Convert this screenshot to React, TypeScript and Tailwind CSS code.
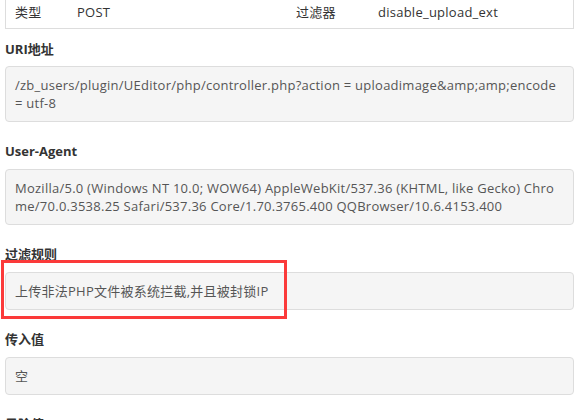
import React from 'react';

interface FieldProps {
  label: string;
  value: string;
  breakAll?: boolean;
  highlight?: boolean;
  first?: boolean;
}

const Field: React.FC<FieldProps> = ({ label, value, breakAll, highlight, first }) => (
  <div>
    <div className={`${first ? 'mt-[11px]' : 'mt-[20px]'} text-[13px] leading-[18px] font-bold text-[#333]`}>
      {label}
    </div>
    <div className={`relative ${first ? 'mt-[8px]' : 'mt-[9px]'}`}>
      <div
        className={`bg-[#f5f5f5] border border-[#dddddd] rounded-[4px] px-[9px] py-[9px] text-[13px] leading-[18px] tracking-[0.25px] text-[#555] ${
          breakAll ? 'break-all' : 'break-words'
        }`}
      >
        {value}
      </div>
      {/* red highlight frame drawn over the rule box */}
      {highlight && (
        <div className="absolute left-[-4px] top-[-12px] w-[286px] h-[59px] border-[3px] border-[#fb3a3a] pointer-events-none" />
      )}
    </div>
  </div>
);

export default function App() {
  return (
    <div
      className="w-[581px] h-[420px] overflow-hidden bg-white pl-[5px] pr-[7px]"
      style={{ fontFamily: '"Open Sans", "Noto Sans CJK SC", sans-serif' }}
    >
      {/* info table, top edge scrolled out of view */}
      <div className="-mt-[10px] border border-[#dddddd] bg-white grid grid-cols-[62px_219px_82px_1fr] pl-[9px] h-[39px] items-center text-[13px] tracking-[0.25px] text-[#333] pt-[6px]">
        <span>类型</span>
        <span>POST</span>
        <span>过滤器</span>
        <span>disable_upload_ext</span>
      </div>

      <Field
        first
        label="URI地址"
        value={'/zb_users/plugin/UEditor/php/controller.php?action = uploadimage&amp;amp;encode = utf-8'}
      />
      <Field
        label="User-Agent"
        breakAll
        value="Mozilla/5.0 (Windows NT 10.0; WOW64) AppleWebKit/537.36 (KHTML, like Gecko) Chrome/70.0.3538.25 Safari/537.36 Core/1.70.3765.400 QQBrowser/10.6.4153.400"
      />
      <Field label="过滤规则" highlight value="上传非法PHP文件被系统拦截,并且被封锁IP" />
      <Field label="传入值" value="空" />
      <Field label="风险值" value="高" />
    </div>
  );
}
